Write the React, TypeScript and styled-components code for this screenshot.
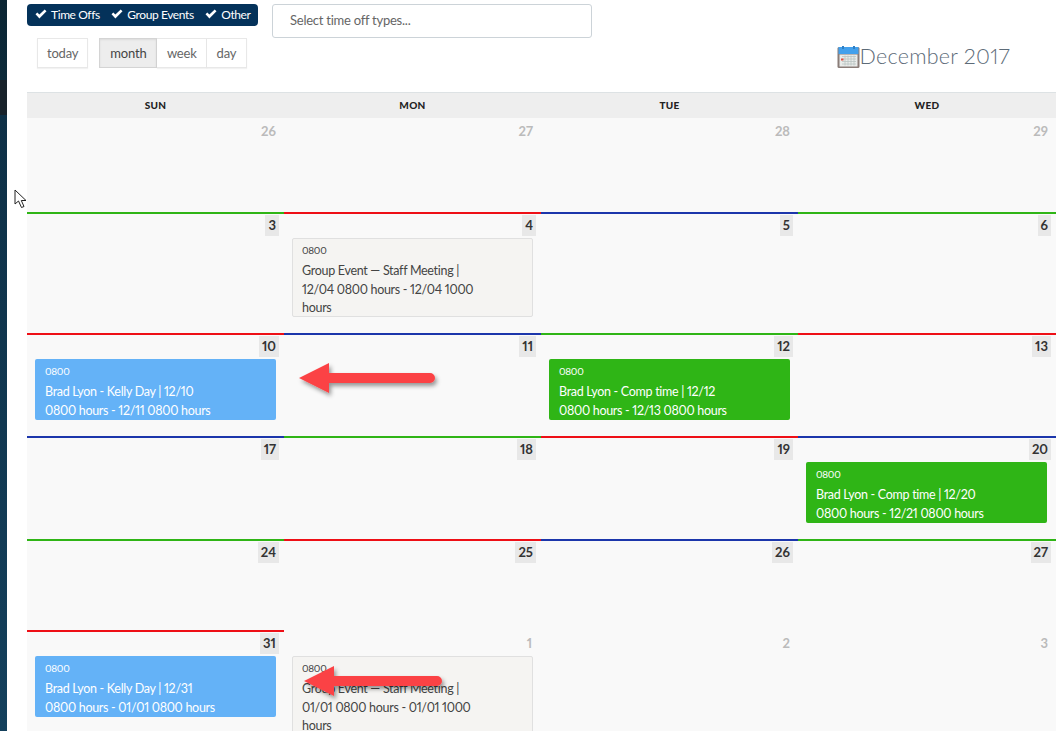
import styled, {createGlobalStyle} from "styled-components";

const GlobalStyle = createGlobalStyle`
    html, body {
        margin: 0;
        padding: 0;
        background: #fff;
        overflow: hidden;
    }
    body {
        font-family: "Lato", "Noto Sans", sans-serif;
        font-variant-numeric: proportional-nums;
    }
`

const Page = styled.div`
    position: relative;
    display: flex;
    width: 1056px;
    height: 731px;
    overflow: hidden;
`
const Sidebar = styled.div`
    flex: 0 0 7px;
    background: linear-gradient(180deg, #0b2533 0, #0c2a3a 80px, #18222a 80px, #18222a 115px, #0e3046 115px, #14405c 731px);
`
const Main = styled.main`
    flex: 1;
    min-width: 0;
    padding: 4px 0 0 20px;
`
const Toolbar = styled.div`
    display: flex;
    height: 88px;
`
const ToolbarLeft = styled.div`
    flex: 0 0 245px;
`
const Filters = styled.div`
    display: flex;
    align-items: center;
    width: 231px;
    height: 22px;
    box-sizing: border-box;
    padding: 0 0 2px 8px;
    gap: 11.5px;
    border-radius: 4px;
    background: #04325a;
`
const Filter = styled.span`
    display: flex;
    align-items: center;
    gap: 4px;
    color: #fff;
    font-size: 12px;
    letter-spacing: -0.4px;
    white-space: nowrap;
`
const Buttons = styled.div`
    display: flex;
    gap: 11px;
    margin: 12px 0 0 10px;
`
const ButtonGroup = styled.div`
    display: flex;
`
const Button = styled.div<{$active?: boolean; $joined?: boolean}>`
    height: 30px;
    box-sizing: border-box;
    padding: 0 ${p => p.$active ? 10 : p.$joined ? 9.5 : 9}px;
    line-height: 28px;
    font-size: 13px;
    letter-spacing: -0.2px;
    color: ${p => p.$active ? '#444' : '#666'};
    background: ${p => p.$active ? '#ededed' : '#fff'};
    border: 1px solid ${p => p.$active ? '#d4d4d4' : '#e8e8e8'};
    border-left-width: ${p => p.$joined ? 0 : 1}px;
    box-shadow: ${p => p.$active ? 'inset 0 1px 2px rgba(0,0,0,.08)' : '0 1px 1px rgba(0,0,0,.05)'};
`
const SelectBox = styled.div`
    flex: 0 0 320px;
    height: 34px;
    box-sizing: border-box;
    padding-left: 17px;
    line-height: 31px;
    font-size: 13px;
    letter-spacing: -0.25px;
    color: #666;
    border: 1px solid #ccd3d8;
    border-radius: 3px;
`
const Title = styled.h2`
    display: flex;
    align-items: center;
    align-self: flex-start;
    margin: 39px 46px 0 auto;
    height: 26px;
    font-size: 21.5px;
    font-weight: 300;
    letter-spacing: .25px;
    color: #5d6b78;
    white-space: nowrap;
`
const TitleIcon = styled.svg`
    margin-top: 2px;
`
const Calendar = styled.div`
    display: grid;
    grid-template-columns: repeat(3, 257px) 1fr;
`
const DayHead = styled.div`
    height: 26px;
    box-sizing: border-box;
    padding-top: 6px;
    text-align: center;
    font-size: 10px;
    font-weight: 900;
    letter-spacing: .3px;
    color: #222;
    background: #eeeeee;
    border-top: 1px solid #dde2e4;
`
const Cell = styled.div<{$line?: string; $height: number}>`
    height: ${p => p.$height}px;
    box-sizing: border-box;
    background: #f9f9f9;
    border-top: 2px solid ${p => p.$line ?? '#f9f9f9'};
    padding: 1px 5px 0 8px;
    overflow: hidden;
`
const DayNumber = styled.div<{$muted?: boolean}>`
    display: flex;
    justify-content: flex-end;
    span {
        height: 21px;
        min-width: 7px;
        padding: 0 3px;
        line-height: 21px;
        text-align: center;
        font-size: 13px;
        font-weight: 700;
        color: ${p => p.$muted ? '#bbb' : '#333'};
        background: ${p => p.$muted ? 'transparent' : '#e8e8e8'};
    }
`
const Event = styled.div<{$tone: 'blue' | 'green' | 'gray'}>`
    width: 241px;
    box-sizing: border-box;
    margin-top: 2px;
    padding: ${p => p.$tone === 'gray' ? '4px 9px 0' : '5px 10px 0'};
    border-radius: 2px;
    font-size: 12.5px;
    letter-spacing: -0.3px;
    line-height: 18.5px;
    height: ${p => p.$tone === 'gray' ? 79 : 61}px;
    color: ${p => p.$tone === 'gray' ? '#444' : '#fff'};
    background: ${p => p.$tone === 'gray' ? '#f5f4f2' : p.$tone === 'blue' ? '#64b2f7' : '#2fb516'};
    border: ${p => p.$tone === 'gray' ? '1px solid #e0e0e0' : 'none'};
    small {
        display: block;
        margin-bottom: 5px;
        font-size: 10px;
        line-height: 14px;
    }
`
const Overlay = styled.svg`
    position: absolute;
    overflow: visible;
`
const Pointer = styled.svg`
    position: absolute;
    left: 14px;
    top: 189px;
`

const green = '#2fb516'
const red = '#ee0f16'
const blue = '#1c36ab'

const Check = () => (
    <svg width="12" height="10" viewBox="0 0 12 10">
        <path d="M0.5 5.2 2.3 3.4 4.4 5.6 9.7 0.4 11.5 2.2 4.4 9.4Z" fill="#fff"/>
    </svg>
)

const CalendarIcon = () => (
    <TitleIcon width="23" height="23" viewBox="0 0 23 23">
        <rect x="0.5" y="1" width="22" height="21" rx="1.5" fill="#8a7d78"/>
        <rect x="1.5" y="1" width="20" height="7" fill="#42a0ec"/>
        <rect x="5" y="0" width="2" height="3" fill="#2f7fc4"/>
        <rect x="16" y="0" width="2" height="3" fill="#2f7fc4"/>
        <rect x="2.5" y="8.5" width="18" height="12" fill="#e9ecea"/>
        <path d="M5 10.5h14M5 13h14M5 15.5h14M5 18h14M8 9.5v10M11 9.5v10M14 9.5v10M17 9.5v10" stroke="#b9c4c2" strokeWidth=".8"/>
        <rect x="4" y="12.5" width="2.5" height="2" fill="#e05040"/>
    </TitleIcon>
)

const Arrow = ({x, y, w}: {x: number, y: number, w: number}) => (
    <Overlay style={{left: x, top: y}} width={w} height="30" viewBox={`0 0 ${w} 30`}>
        <defs>
            <filter id={`shade${y}`} x="-10%" y="-30%" width="120%" height="170%">
                <feDropShadow dx="2" dy="3" stdDeviation="2" floodColor="#000" floodOpacity=".4"/>
            </filter>
        </defs>
        <path
            d={`M0 15 30 0V10H${w - 5}a5 5 0 0 1 0 10H30V30Z`}
            fill="#fb4345"
            filter={`url(#shade${y})`}
        />
    </Overlay>
)

type EventData = {tone: 'blue' | 'green' | 'gray', lines: string[]}
type CellData = {day: number, muted?: boolean, line?: string, event?: EventData}

const rows: {height: number, cells: CellData[]}[] = [
    {height: 94, cells: [{day: 26, muted: true}, {day: 27, muted: true}, {day: 28, muted: true}, {day: 29, muted: true}]},
    {height: 121, cells: [
        {day: 3, line: green},
        {day: 4, line: red, event: {tone: 'gray', lines: ['Group Event — Staff Meeting |', '12/04 0800 hours - 12/04 1000', 'hours']}},
        {day: 5, line: blue},
        {day: 6, line: green},
    ]},
    {height: 103, cells: [
        {day: 10, line: red, event: {tone: 'blue', lines: ['Brad Lyon - Kelly Day | 12/10', '0800 hours - 12/11 0800 hours']}},
        {day: 11, line: blue},
        {day: 12, line: green, event: {tone: 'green', lines: ['Brad Lyon - Comp time | 12/12', '0800 hours - 12/13 0800 hours']}},
        {day: 13, line: red},
    ]},
    {height: 103, cells: [
        {day: 17, line: blue},
        {day: 18, line: green},
        {day: 19, line: red},
        {day: 20, line: blue, event: {tone: 'green', lines: ['Brad Lyon - Comp time | 12/20', '0800 hours - 12/21 0800 hours']}},
    ]},
    {height: 91, cells: [
        {day: 24, line: green},
        {day: 25, line: red},
        {day: 26, line: blue},
        {day: 27, line: green},
    ]},
    {height: 101, cells: [
        {day: 31, line: red, event: {tone: 'blue', lines: ['Brad Lyon - Kelly Day | 12/31', '0800 hours - 01/01 0800 hours']}},
        {day: 1, muted: true, event: {tone: 'gray', lines: ['Group Event — Staff Meeting |', '01/01 0800 hours - 01/01 1000', 'hours']}},
        {day: 2, muted: true},
        {day: 3, muted: true},
    ]},
]

const App = () => {
    return (<Page>
        <GlobalStyle/>
        <Sidebar/>
        <Main>
            <Toolbar>
                <ToolbarLeft>
                    <Filters>
                        {['Time Offs', 'Group Events', 'Other'].map(name => (
                            <Filter key={name}><Check/>{name}</Filter>
                        ))}
                    </Filters>
                    <Buttons>
                        <Button>today</Button>
                        <ButtonGroup>
                            <Button $active>month</Button>
                            <Button $joined>week</Button>
                            <Button $joined>day</Button>
                        </ButtonGroup>
                    </Buttons>
                </ToolbarLeft>
                <SelectBox>Select time off types...</SelectBox>
                <Title><CalendarIcon/>December 2017</Title>
            </Toolbar>
            <Calendar>
                {['SUN', 'MON', 'TUE', 'WED'].map(day => <DayHead key={day}>{day}</DayHead>)}
                {rows.map(row => row.cells.map((cell, i) => (
                    <Cell key={`${row.height}-${cell.day}-${i}`} $height={row.height} $line={cell.line}>
                        <DayNumber $muted={cell.muted}><span>{cell.day}</span></DayNumber>
                        {cell.event && (
                            <Event $tone={cell.event.tone}>
                                <small>0800</small>
                                {cell.event.lines.map(line => <div key={line}>{line}</div>)}
                            </Event>
                        )}
                    </Cell>
                )))}
            </Calendar>
        </Main>
        <Arrow x={299} y={363} w={136}/>
        <Arrow x={304} y={666} w={138}/>
        <Pointer width="13" height="20" viewBox="0 0 13 20">
            <path d="M1 1V15L4.5 12 7.5 18.5 10 17.5 7.3 11.5H12Z" fill="#fff" stroke="#222" strokeWidth="1"/>
        </Pointer>
    </Page>)
}

export default App
